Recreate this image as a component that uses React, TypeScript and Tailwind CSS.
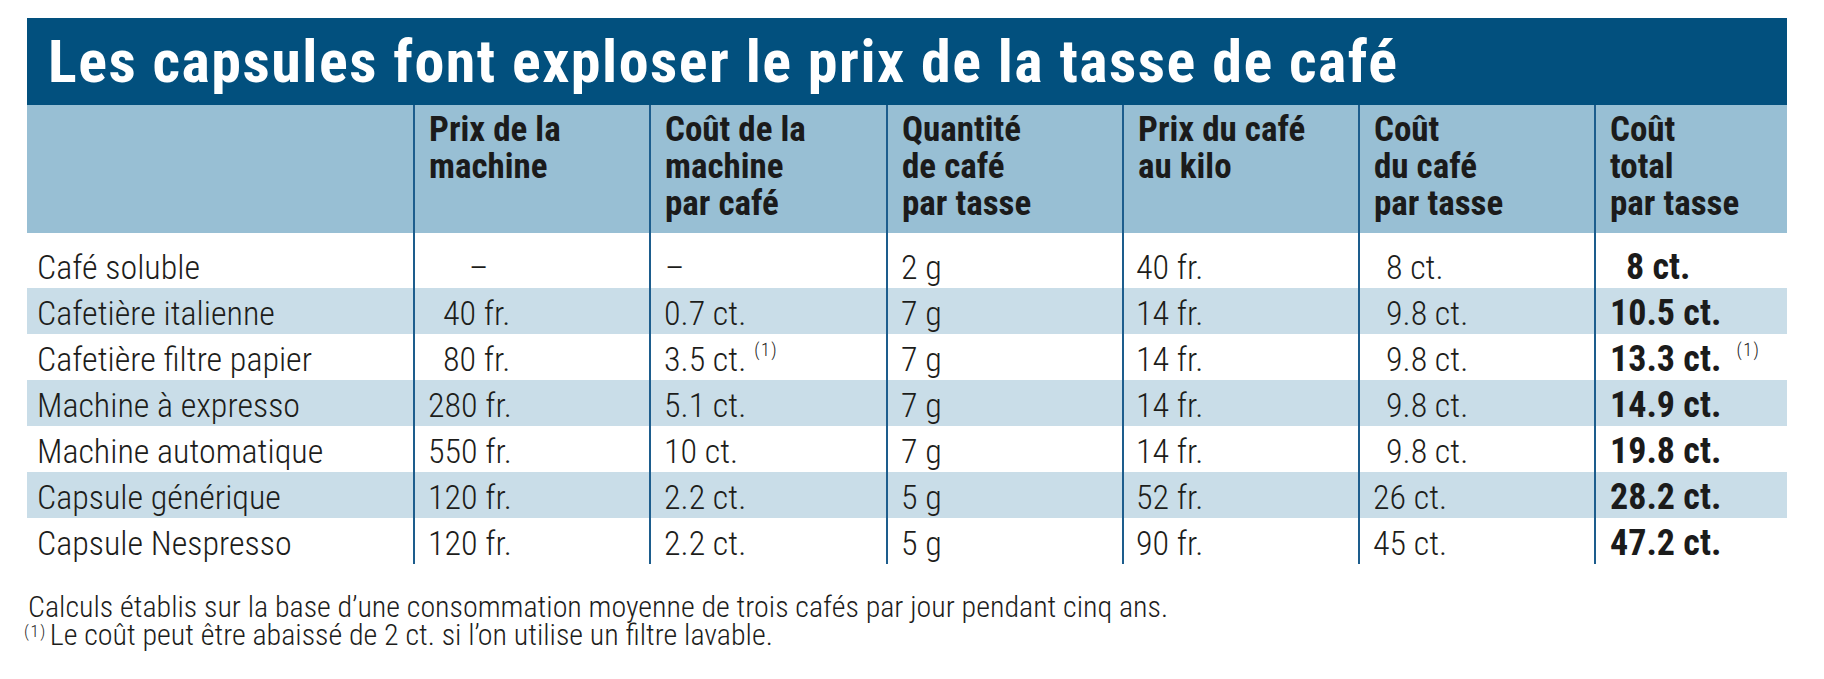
import React from "react";

type Cell = { t: string; pad: string; sup?: boolean };

const rows: Cell[][] = [
  [
    { t: "Café soluble", pad: "pl-[10px]" },
    { t: "–", pad: "pl-[54px]" },
    { t: "–", pad: "pl-[14px]" },
    { t: "2 g", pad: "pl-[13px]" },
    { t: "40 fr.", pad: "pl-[12px]" },
    { t: "8 ct.", pad: "pl-[26px]" },
    { t: "8 ct.", pad: "pl-[30px]" },
  ],
  [
    { t: "Cafetière italienne", pad: "pl-[10px]" },
    { t: "40 fr.", pad: "pl-[28px]" },
    { t: "0.7 ct.", pad: "pl-[13px]" },
    { t: "7 g", pad: "pl-[13px]" },
    { t: "14 fr.", pad: "pl-[12px]" },
    { t: "9.8 ct.", pad: "pl-[26px]" },
    { t: "10.5 ct.", pad: "pl-[14px]" },
  ],
  [
    { t: "Cafetière filtre papier", pad: "pl-[10px]" },
    { t: "80 fr.", pad: "pl-[28px]" },
    { t: "3.5 ct.", pad: "pl-[13px]", sup: true },
    { t: "7 g", pad: "pl-[13px]" },
    { t: "14 fr.", pad: "pl-[12px]" },
    { t: "9.8 ct.", pad: "pl-[26px]" },
    { t: "13.3 ct.", pad: "pl-[14px]", sup: true },
  ],
  [
    { t: "Machine à expresso", pad: "pl-[10px]" },
    { t: "280 fr.", pad: "pl-[13px]" },
    { t: "5.1 ct.", pad: "pl-[13px]" },
    { t: "7 g", pad: "pl-[13px]" },
    { t: "14 fr.", pad: "pl-[12px]" },
    { t: "9.8 ct.", pad: "pl-[26px]" },
    { t: "14.9 ct.", pad: "pl-[14px]" },
  ],
  [
    { t: "Machine automatique", pad: "pl-[10px]" },
    { t: "550 fr.", pad: "pl-[13px]" },
    { t: "10 ct.", pad: "pl-[13px]" },
    { t: "7 g", pad: "pl-[13px]" },
    { t: "14 fr.", pad: "pl-[12px]" },
    { t: "9.8 ct.", pad: "pl-[26px]" },
    { t: "19.8 ct.", pad: "pl-[14px]" },
  ],
  [
    { t: "Capsule générique", pad: "pl-[10px]" },
    { t: "120 fr.", pad: "pl-[13px]" },
    { t: "2.2 ct.", pad: "pl-[13px]" },
    { t: "5 g", pad: "pl-[13px]" },
    { t: "52 fr.", pad: "pl-[12px]" },
    { t: "26 ct.", pad: "pl-[13px]" },
    { t: "28.2 ct.", pad: "pl-[14px]" },
  ],
  [
    { t: "Capsule Nespresso", pad: "pl-[10px]" },
    { t: "120 fr.", pad: "pl-[13px]" },
    { t: "2.2 ct.", pad: "pl-[13px]" },
    { t: "5 g", pad: "pl-[13px]" },
    { t: "90 fr.", pad: "pl-[12px]" },
    { t: "45 ct.", pad: "pl-[13px]" },
    { t: "47.2 ct.", pad: "pl-[14px]" },
  ],
];

const headers: string[][] = [
  [],
  ["Prix de la", "machine"],
  ["Coût de la", "machine", "par café"],
  ["Quantité", "de café", "par tasse"],
  ["Prix du café", "au kilo"],
  ["Coût", "du café", "par tasse"],
  ["Coût", "total", "par tasse"],
];

const grid = "grid grid-cols-[386px_236px_237px_236px_236px_236px_193px]";

export default function App() {
  return (
    <div className="w-[1824px] h-[679px] bg-white pt-[18px] overflow-hidden font-['Roboto_Condensed',sans-serif] text-[#1d1d1b]">
      <div className="ml-[27px] w-[1760px]">
        <div className="h-[87px] bg-[#02507e] pl-[21px] text-white text-[60px] leading-[87px] tracking-[1.5px] font-bold whitespace-nowrap">
          Les capsules font exploser le prix de la tasse de café
        </div>
        <div className={`${grid} h-[128px] bg-[#98bfd4]`}>
          {headers.map((h, i) => (
            <div
              key={i}
              className={`${i > 0 ? "border-l-2 border-[#1d5d8d]" : ""} pt-[6px] pl-[14px] text-[35px] leading-[37px] font-bold text-[#1b1b1b]`}
            >
              {h.map((l) => (
                <div key={l}>{l}</div>
              ))}
            </div>
          ))}
        </div>
        {rows.map((r, ri) => (
          <div
            key={ri}
            className={`${grid} ${ri === 0 ? "h-[55px]" : "h-[46px]"} ${ri % 2 === 1 ? "bg-[#c9dde8]" : "bg-white"}`}
          >
            {r.map((c, ci) => (
              <div
                key={ci}
                className={`${ci > 0 ? "border-l-2 border-[#1d5d8d]" : ""} ${c.pad} ${ri === 0 ? "pt-[13px]" : "pt-[4px]"} h-full overflow-hidden leading-[42px] whitespace-nowrap ${
                  ci === 6 ? "text-[36px] font-bold text-[#1b1b1b]" : "text-[34px] font-light"
                }`}
              >
                {c.t}
                {c.sup && (
                  <span
                    className={`${ci === 6 ? "ml-[15px]" : "ml-[8px]"} align-[15px] text-[18px] leading-none tracking-[1.5px] font-light`}
                  >
                    (1)
                  </span>
                )}
              </div>
            ))}
          </div>
        ))}
      </div>
      <div className="ml-[24px] mt-[30px] text-[30px] leading-[26px] font-light whitespace-nowrap">
        <div className="pl-[4px]">
          Calculs établis sur la base d’une consommation moyenne de trois cafés par jour pendant cinq ans.
        </div>
        <div className="mt-[2px]">
          <span className="align-[8px] text-[17px] leading-none tracking-[1.5px]">(1)</span>
          <span className="ml-[3px]">Le coût peut être abaissé de 2 ct. si l’on utilise un filtre lavable.</span>
        </div>
      </div>
    </div>
  );
}
